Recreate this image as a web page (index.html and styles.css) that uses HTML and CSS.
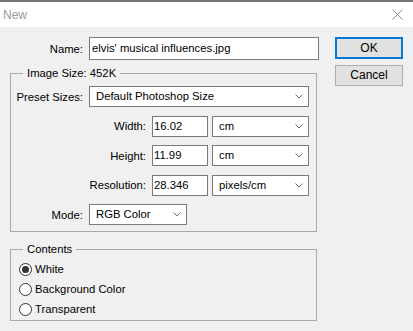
FILE: index.html
```html
<!DOCTYPE html>
<html lang="en">
<head>
    <meta charset="UTF-8">
    <meta name="viewport" content="width=device-width, initial-scale=1.0">
    <title>New</title>
    <link rel="stylesheet" href="styles.css">
</head>
<body>
    <div class="window">
        <div class="titlebar">
            <span class="title">New</span>
            <svg class="close" width="11" height="11" viewBox="0 0 11 11">
                <path d="M0.5 0.5 L10.5 10.5 M10.5 0.5 L0.5 10.5" stroke="#8a8a8a" stroke-width="1" fill="none"/>
            </svg>
        </div>
        <div class="dialog">
            <div class="form">
                <div class="row">
                    <span class="label name-label">Name:</span>
                    <div class="field name-field">elvis' musical influences.jpg</div>
                </div>

                <fieldset class="group size-group">
                    <legend>Image Size: 452K</legend>
                    <div class="rows">
                        <div class="row">
                            <span class="label">Preset Sizes:</span>
                            <div class="dropdown preset">Default Photoshop Size
                                <svg class="chevron" width="8" height="5" viewBox="0 0 8 5"><path d="M0.5 0.5 L4 4 L7.5 0.5" stroke="#6a6a6a" fill="none"/></svg>
                            </div>
                        </div>
                        <div class="row">
                            <span class="label dim-label">Width:</span>
                            <div class="field num">16.02</div>
                            <div class="dropdown unit">cm
                                <svg class="chevron" width="8" height="5" viewBox="0 0 8 5"><path d="M0.5 0.5 L4 4 L7.5 0.5" stroke="#6a6a6a" fill="none"/></svg>
                            </div>
                        </div>
                        <div class="row">
                            <span class="label dim-label">Height:</span>
                            <div class="field num">11.99</div>
                            <div class="dropdown unit">cm
                                <svg class="chevron" width="8" height="5" viewBox="0 0 8 5"><path d="M0.5 0.5 L4 4 L7.5 0.5" stroke="#6a6a6a" fill="none"/></svg>
                            </div>
                        </div>
                        <div class="row">
                            <span class="label dim-label">Resolution:</span>
                            <div class="field num">28.346</div>
                            <div class="dropdown unit">pixels/cm
                                <svg class="chevron" width="8" height="5" viewBox="0 0 8 5"><path d="M0.5 0.5 L4 4 L7.5 0.5" stroke="#6a6a6a" fill="none"/></svg>
                            </div>
                        </div>
                        <div class="row">
                            <span class="label">Mode:</span>
                            <div class="dropdown mode">RGB Color
                                <svg class="chevron" width="8" height="5" viewBox="0 0 8 5"><path d="M0.5 0.5 L4 4 L7.5 0.5" stroke="#6a6a6a" fill="none"/></svg>
                            </div>
                        </div>
                    </div>
                </fieldset>

                <fieldset class="group contents-group">
                    <legend>Contents</legend>
                    <div class="radio"><span class="circle checked"></span>White</div>
                    <div class="radio"><span class="circle"></span>Background Color</div>
                    <div class="radio"><span class="circle"></span>Transparent</div>
                </fieldset>
            </div>

            <div class="buttons">
                <div class="btn ok">OK</div>
                <div class="btn">Cancel</div>
            </div>
        </div>
    </div>
</body>
</html>
```

FILE: styles.css
```css
body {
    margin: 0;
    font-family: "Liberation Sans", Arial, sans-serif;
    font-size: 11.3px;
    color: #000;
    background-color: #f0f0f0;
}

.window {
    width: 413px;
    height: 331px;
    overflow: hidden;
    background-color: #f0f0f0;
}

.titlebar {
    display: flex;
    justify-content: space-between;
    align-items: center;
    height: 25px;
    border-top: 2px solid #747474;
    background-color: #fff;
    padding: 0 10px 0 3px;
}

.title {
    color: #9a9a9a;
    font-size: 12px;
}

.dialog {
    display: flex;
    padding: 10px 0 0 10px;
}

.form {
    width: 309px;
}

.row {
    display: flex;
    align-items: center;
}

.label {
    width: 72px;
    margin-right: 6px;
    text-align: right;
}

.name-label {
    width: 73px;
}

.dim-label {
    width: 135px;
}

.field,
.dropdown {
    box-sizing: border-box;
    height: 21px;
    line-height: 19px;
    border: 1px solid #7a7a7a;
    background-color: #fff;
    white-space: nowrap;
}

.field {
    padding-left: 2px;
}

.name-field {
    width: 230px;
    height: 23px;
    line-height: 21px;
}

.num {
    width: 56px;
    padding-left: 1px;
}

.dropdown {
    display: flex;
    align-items: center;
    justify-content: space-between;
    padding: 0 5px 0 6px;
}

.preset {
    width: 220px;
}

.unit {
    width: 97px;
    margin-left: 4px;
    padding-left: 6px;
}

.mode {
    width: 98px;
}

.group {
    box-sizing: border-box;
    width: 307px;
    margin: 6px 0 0 0;
    padding: 0;
    border: 1px solid #a9a9a9;
}

.group legend {
    margin-left: 12px;
    padding: 0 4px;
    line-height: 14px;
}

.rows {
    display: flex;
    flex-direction: column;
    gap: 8.5px;
    padding: 6px 0 6px 0;
}

.contents-group {
    margin-top: 10px;
    padding: 3px 0 1px 0;
}

.radio {
    display: flex;
    align-items: center;
    height: 20px;
}

.circle {
    box-sizing: border-box;
    width: 13px;
    height: 13px;
    margin: 0 3px 0 8px;
    border: 1px solid #333;
    border-radius: 50%;
    background-color: #fff;
    display: flex;
    justify-content: center;
    align-items: center;
}

.circle.checked::after {
    content: "";
    width: 7px;
    height: 7px;
    border-radius: 50%;
    background-color: #333;
}

.buttons {
    display: flex;
    flex-direction: column;
    gap: 6px;
    margin-left: 16px;
}

.btn {
    box-sizing: border-box;
    width: 68px;
    height: 21px;
    line-height: 19px;
    text-align: center;
    font-size: 12px;
    border: 1px solid #adadad;
    background-color: #e1e1e1;
}

.btn.ok {
    height: 22px;
    line-height: 18px;
    border: 2px solid #0078d7;
}
```
